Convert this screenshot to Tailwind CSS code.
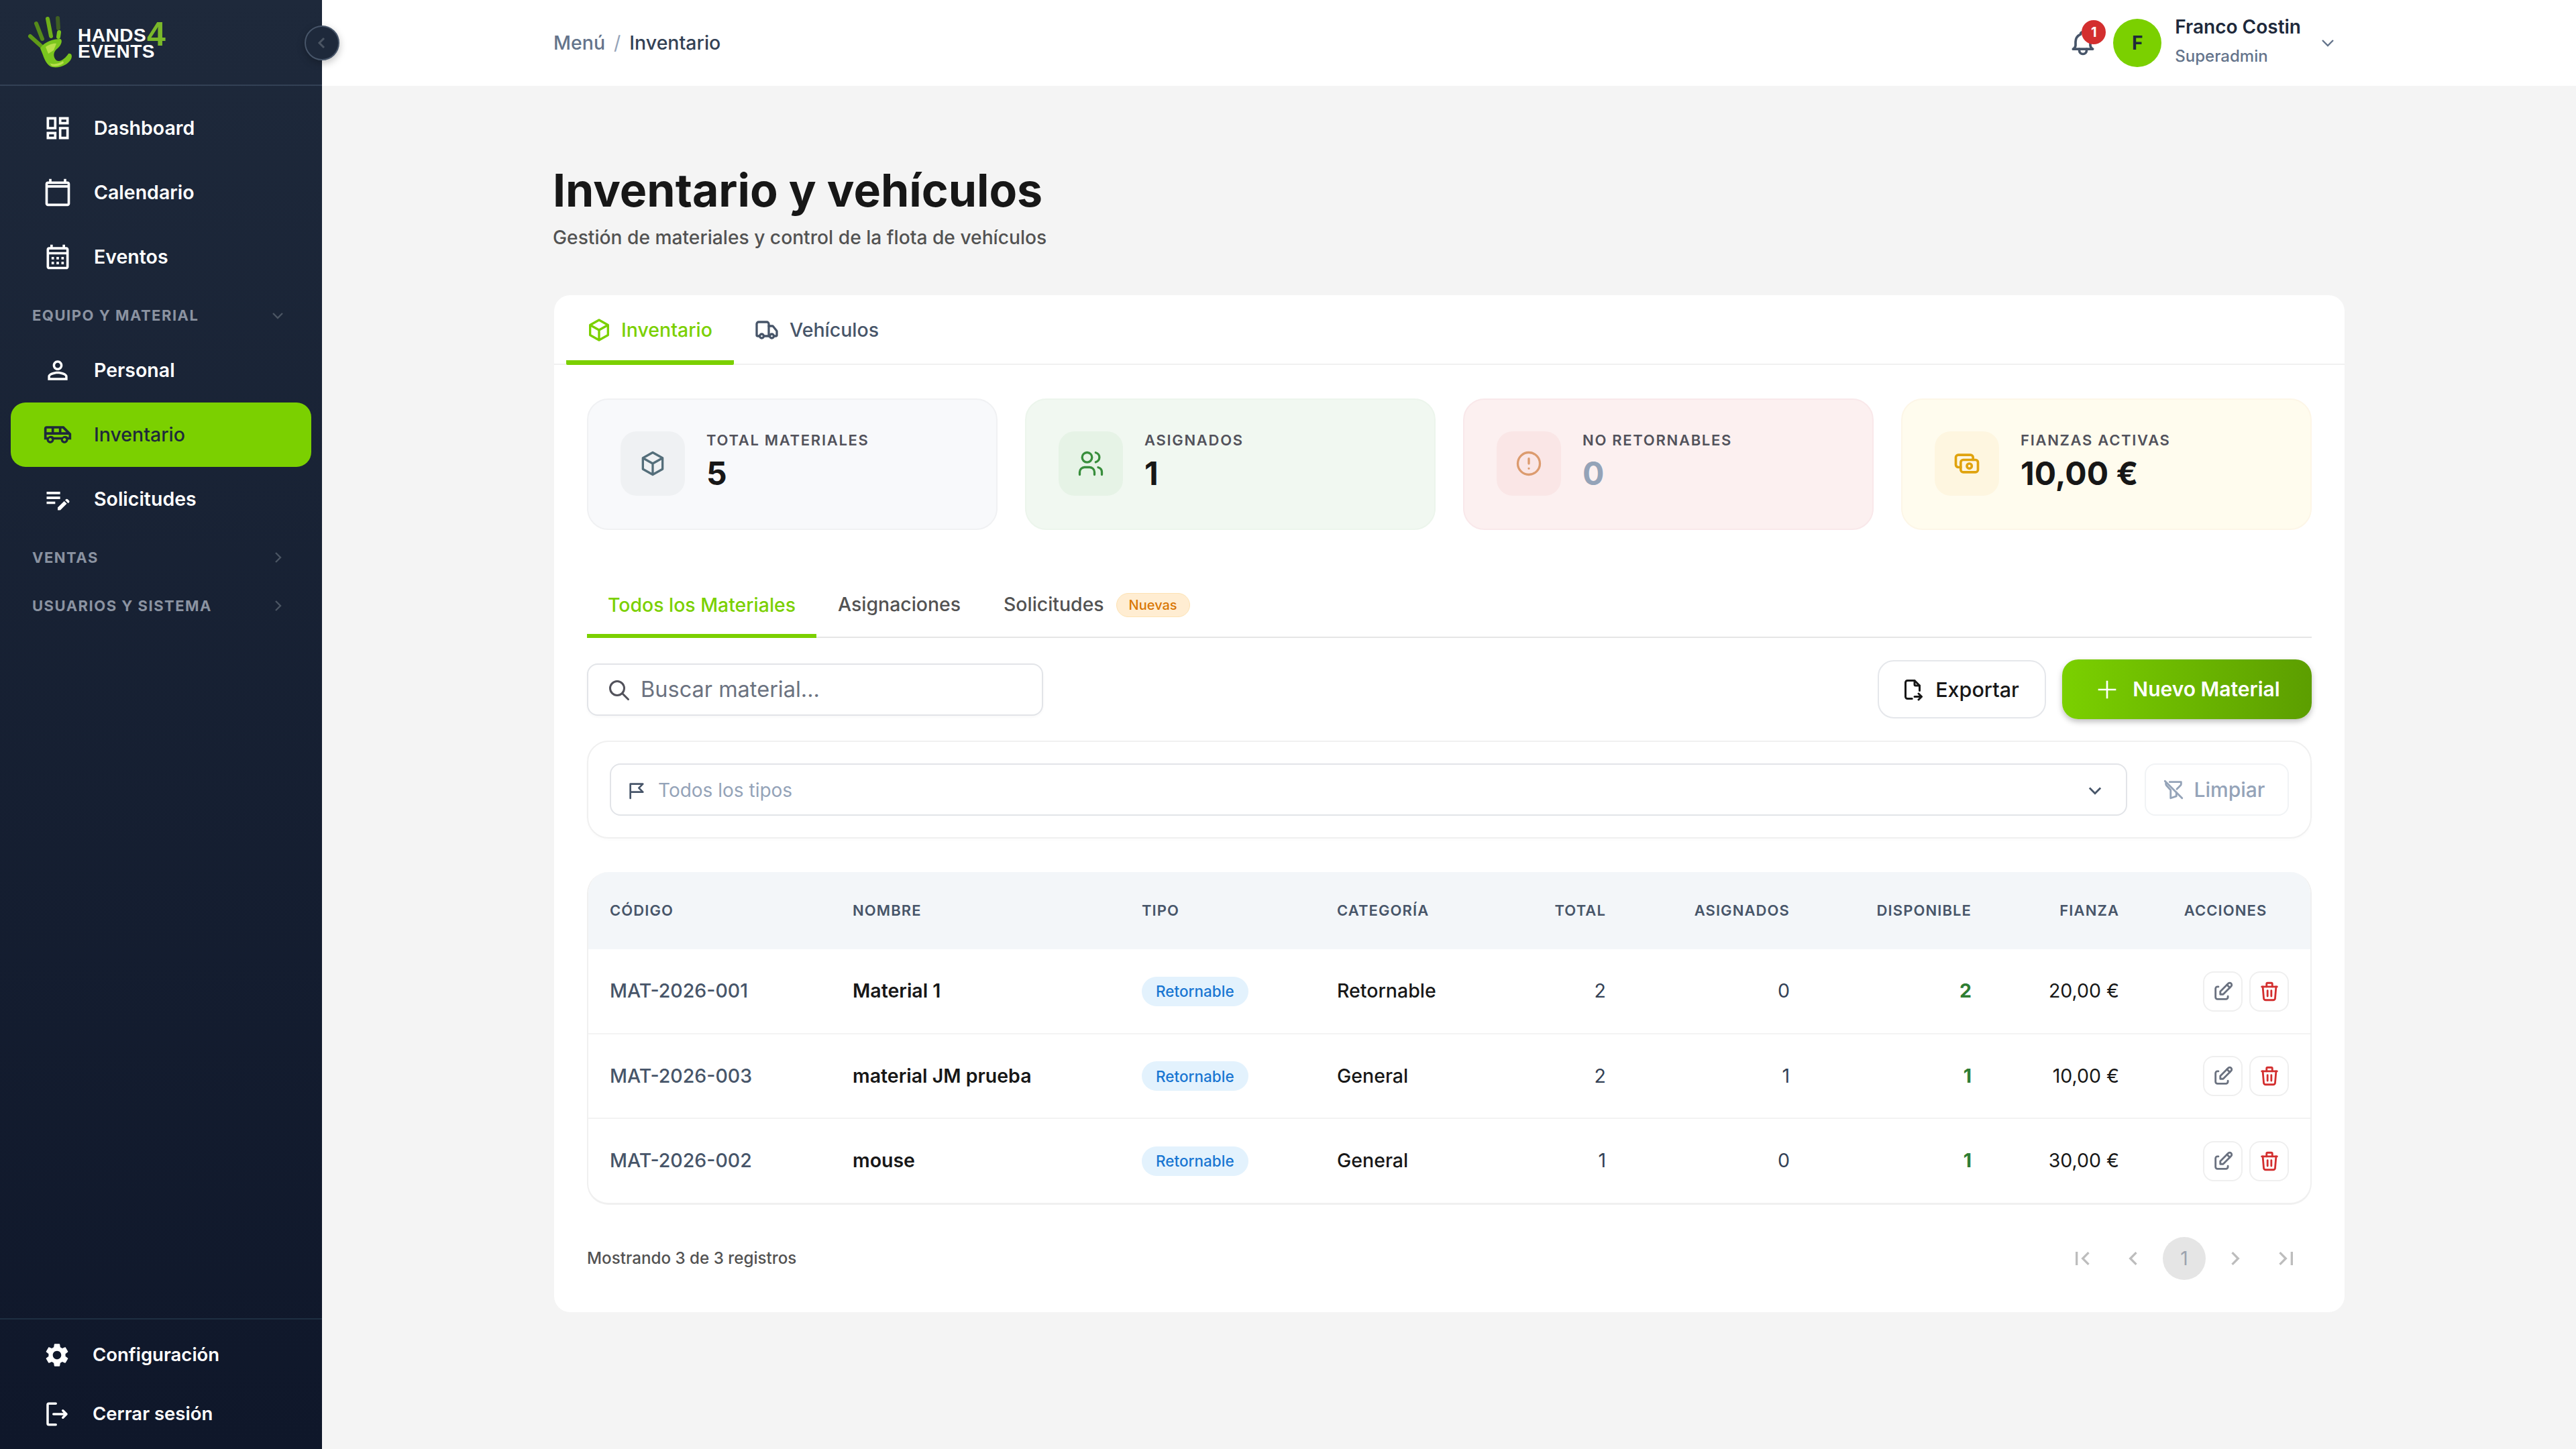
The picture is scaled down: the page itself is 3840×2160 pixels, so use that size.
<!DOCTYPE html>
<html lang="es">
<head>
    <meta charset="UTF-8">
    <meta name="viewport" content="width=device-width, initial-scale=1.0">
    <title>Inventario - Hands4Events</title>
    <script src="https://cdn.jsdelivr.net/npm/@tailwindcss/browser@4"></script>
</head>
<body class="bg-[#f4f4f4] font-[Inter,sans-serif]">
<div class="flex w-[3840px] h-[2160px] relative">

    <!-- Sidebar -->
    <aside class="w-[480px] shrink-0 flex flex-col bg-gradient-to-b from-[#1e293b] to-[#0f172a] text-white">
        <div class="h-[128px] border-b-2 border-[#334155] flex items-start pl-[40px] pt-[22px] gap-[4px]">
            <svg class="w-[72px] h-[84px] shrink-0" viewBox="38 22 72 84" fill="#7ac51e" stroke-linecap="round">
                <path d="M43 54L63 72" stroke="#5f9a18" stroke-width="6"/>
                <path d="M52 35L61 58" stroke="#558a1a" stroke-width="6"/>
                <path d="M69 28L74 54" stroke="#6fb01a" stroke-width="6"/>
                <path d="M84 27L85 42" stroke="#3f5f22" stroke-width="6"/>
                <path d="M86 48L85 55" stroke="#7ac51e" stroke-width="6"/>
                <path d="M58 72C64 62 78 58 88 58C92 60 89 68 84 72C78 76 76 84 82 90C88 94 96 86 100 80C105 79 106 84 104 88C100 96 88 102 76 100C68 98 64 88 62 82Z"/>
                <path d="M66 70c4-3 12-6 16-5l-4 10-8 5z" fill="#b8e04a"/>
                <path d="M72 94c5 3 14 1 20-3l1 3c-5 4-13 6-18 4z" fill="#b8e04a"/>
            </svg>
            <div class="relative pt-[19px] font-['Liberation_Sans',sans-serif] font-bold text-[28px] leading-[24px] tracking-[0.5px] text-white">
                <div>HANDS</div>
                <div>EVENTS</div>
                <span class="absolute left-[103px] top-[4px] text-[50px] leading-[50px] text-[#7ab82a]">4</span>
            </div>
        </div>

        <nav class="pt-[15px] flex flex-col text-[28.5px] font-semibold">
            <a class="mx-[16px] h-[96px] pl-[48px] flex items-center gap-[32px]">
                <svg class="w-[44px] h-[44px]" viewBox="0 0 24 24" fill="currentColor"><path d="M19 5v2h-4V5zM9 5v6H5V5zm10 8v6h-4v-6zM9 17v2H5v-2zM21 3h-8v6h8zM11 3H3v10h8zm10 8h-8v10h8zm-10 4H3v6h8z"/></svg>
                Dashboard
            </a>
            <a class="mx-[16px] h-[96px] pl-[48px] flex items-center gap-[32px]">
                <svg class="w-[44px] h-[44px]" viewBox="0 0 24 24" fill="currentColor"><path d="M20 3h-1V1h-2v2H7V1H5v2H4c-1.1 0-2 .9-2 2v16c0 1.1.9 2 2 2h16c1.1 0 2-.9 2-2V5c0-1.1-.9-2-2-2m0 18H4V8h16zm0-15H4V5h16z"/></svg>
                Calendario
            </a>
            <a class="mx-[16px] h-[96px] pl-[48px] flex items-center gap-[32px]">
                <svg class="w-[44px] h-[44px]" viewBox="0 0 24 24" fill="currentColor"><path d="M19 4h-1V2h-2v2H8V2H6v2H5c-1.11 0-1.99.9-1.99 2L3 20c0 1.1.89 2 2 2h14c1.1 0 2-.9 2-2V6c0-1.1-.9-2-2-2m0 16H5V10h14zm0-12H5V6h14zM9 14H7v-2h2zm4 0h-2v-2h2zm4 0h-2v-2h2zm-8 4H7v-2h2zm4 0h-2v-2h2zm4 0h-2v-2h2z"/></svg>
                Eventos
            </a>

            <div class="h-[72px] mb-px pt-[6px] pl-[48px] pr-[54px] flex items-center justify-between text-[22px] font-bold tracking-[1.5px] text-[#8b93a1]">
                EQUIPO Y MATERIAL
                <svg class="w-[24px] h-[24px] text-[#4b5563]" viewBox="0 0 24 24" fill="none" stroke="currentColor" stroke-width="2.4"><path d="M5 9l7 7 7-7"/></svg>
            </div>
            <a class="mx-[16px] h-[96px] pl-[48px] flex items-center gap-[32px]">
                <svg class="w-[44px] h-[44px]" viewBox="0 0 24 24" fill="currentColor"><path d="M12 5.9c1.16 0 2.1.94 2.1 2.1s-.94 2.1-2.1 2.1S9.9 9.16 9.9 8s.94-2.1 2.1-2.1m0 9c2.97 0 6.1 1.46 6.1 2.1v1.1H5.9V17c0-.64 3.13-2.1 6.1-2.1M12 4C9.79 4 8 5.79 8 8s1.79 4 4 4 4-1.79 4-4-1.79-4-4-4m0 9c-2.67 0-8 1.34-8 4v3h16v-3c0-2.66-5.33-4-8-4"/></svg>
                Personal
            </a>
            <a class="mx-[16px] h-[96px] pl-[48px] flex items-center gap-[32px] rounded-[22px] bg-[#7bd000] text-[#1e293b] font-medium">
                <svg class="w-[44px] h-[44px]" viewBox="0 0 24 24" fill="currentColor"><path d="M17 5H3c-1.1 0-2 .89-2 2v9h2c0 1.65 1.34 3 3 3s3-1.35 3-3h5.5c0 1.65 1.34 3 3 3s3-1.35 3-3H23v-5zm-2 2h1l3 3h-4zM9 7h4v3H9zM3 7h4v3H3zm3 10.25c-.69 0-1.25-.56-1.25-1.25s.56-1.25 1.25-1.25 1.25.56 1.25 1.25-.56 1.25-1.25 1.25m11.5 0c-.69 0-1.25-.56-1.25-1.25s.56-1.25 1.25-1.25 1.25.56 1.25 1.25-.56 1.25-1.25 1.25M21 14h-.78c-.55-.61-1.34-1-2.22-1s-1.67.39-2.22 1H8.78c-.55-.61-1.34-1-2.28-1s-1.67.39-2.22 1H3v-2h18z"/></svg>
                Inventario
            </a>
            <a class="mx-[16px] h-[96px] pl-[48px] flex items-center gap-[32px]">
                <svg class="w-[44px] h-[44px]" viewBox="0 0 24 24" fill="currentColor"><path d="M3 10h11v2H3zm0-2h11V6H3zm0 8h7v-2H3zm15.01-3.13.71-.71c.39-.39 1.02-.39 1.41 0l1.12 1.12c.39.39.39 1.02 0 1.41l-.71.71zm-.71.71L12 18.88V21h2.12l5.3-5.3z"/></svg>
                Solicitudes
            </a>

            <div class="h-[72px] pt-[6px] pl-[48px] pr-[54px] flex items-center justify-between text-[22px] font-bold tracking-[1.5px] text-[#8b93a1]">
                VENTAS
                <svg class="w-[24px] h-[24px] text-[#4b5563]" viewBox="0 0 24 24" fill="none" stroke="currentColor" stroke-width="2.4"><path d="M9 5l7 7-7 7"/></svg>
            </div>
            <div class="h-[72px] pt-[6px] pl-[48px] pr-[54px] flex items-center justify-between text-[22px] font-bold tracking-[1.5px] text-[#8b93a1]">
                USUARIOS Y SISTEMA
                <svg class="w-[24px] h-[24px] text-[#4b5563]" viewBox="0 0 24 24" fill="none" stroke="currentColor" stroke-width="2.4"><path d="M9 5l7 7-7 7"/></svg>
            </div>
        </nav>

        <div class="mt-auto mb-[8px] border-t-2 border-[#1e2f42] pt-[9px] text-[27.5px] font-semibold">
            <a class="h-[88px] pl-[64px] flex items-center gap-[32px]">
                <svg class="w-[42px] h-[42px]" viewBox="0 0 24 24" fill="currentColor"><path d="M19.14 12.94c.04-.3.06-.61.06-.94 0-.32-.02-.64-.07-.94l2.03-1.58c.18-.14.23-.41.12-.61l-1.92-3.32c-.12-.22-.37-.29-.59-.22l-2.39.96c-.5-.38-1.03-.7-1.62-.94l-.36-2.54c-.04-.24-.24-.41-.48-.41h-3.84c-.24 0-.43.17-.47.41l-.36 2.54c-.59.24-1.13.57-1.62.94l-2.39-.96c-.22-.08-.47 0-.59.22L2.74 8.87c-.12.21-.08.47.12.61l2.03 1.58c-.05.3-.09.63-.09.94s.02.64.07.94l-2.03 1.58c-.18.14-.23.41-.12.61l1.92 3.32c.12.22.37.29.59.22l2.39-.96c.5.38 1.03.7 1.62.94l.36 2.54c.05.24.24.41.48.41h3.84c.24 0 .44-.17.47-.41l.36-2.54c.59-.24 1.13-.56 1.62-.94l2.39.96c.22.08.47 0 .59-.22l1.92-3.32c.12-.22.07-.47-.12-.61zM12 15.6c-1.98 0-3.6-1.62-3.6-3.6s1.62-3.6 3.6-3.6 3.6 1.62 3.6 3.6-1.62 3.6-3.6 3.6"/></svg>
                Configuración
            </a>
            <a class="h-[88px] pl-[64px] flex items-center gap-[32px]">
                <svg class="w-[42px] h-[42px]" viewBox="0 0 24 24" fill="none" stroke="currentColor" stroke-width="2" stroke-linecap="round" stroke-linejoin="round"><path d="M11 3H5a1 1 0 0 0-1 1v16a1 1 0 0 0 1 1h6"/><path d="M9 12h11M17 9l3 3-3 3"/></svg>
                Cerrar sesión
            </a>
        </div>
    </aside>

    <!-- Collapse button -->
    <button class="absolute left-[454px] top-[38px] w-[52px] h-[52px] rounded-full bg-[#1e293b] border-2 border-[#475569] shadow-[0_4px_12px_rgba(0,0,0,0.25)] flex items-center justify-center text-[#4b5563]">
        <svg class="w-[24px] h-[24px]" viewBox="0 0 24 24" fill="none" stroke="currentColor" stroke-width="3"><path d="M15 5l-7 7 7 7"/></svg>
    </button>

    <div class="flex-1 flex flex-col min-w-0">
        <!-- Top bar -->
        <header class="h-[128px] bg-white flex items-center justify-between pl-[345px] pr-[358px] text-[28.5px] font-medium">
            <div class="flex items-center gap-[13px]">
                <span class="text-[#64748b]">Menú</span>
                <span class="text-[#94a3b8] font-normal">/</span>
                <span class="text-[#334155]">Inventario</span>
            </div>
            <div class="flex items-center">
                <div class="relative w-[44px] h-[44px] mr-[23px] text-[#475569]">
                    <svg class="w-[44px] h-[44px]" viewBox="0 0 24 24" fill="none" stroke="currentColor" stroke-width="2" stroke-linecap="round" stroke-linejoin="round"><path d="M10 5a2 2 0 1 1 4 0a7 7 0 0 1 4 6v3a4 4 0 0 0 2 3h-16a4 4 0 0 0 2-3v-3a7 7 0 0 1 4-6"/><path d="M9 17v1a3 3 0 0 0 6 0v-1"/></svg>
                    <span class="absolute -top-[12px] -right-[12px] w-[36px] h-[36px] rounded-full bg-[#d32f2f] text-white text-[20px] font-bold flex items-center justify-center">1</span>
                </div>
                <div class="w-[72px] h-[72px] rounded-full bg-[#7bd000] text-[#1e293b] font-bold text-[28px] flex items-center justify-center">F</div>
                <div class="ml-[20px] pb-[4px] flex flex-col">
                    <span class="text-[28px] leading-[36px] font-semibold text-[#1e293b]">Franco Costin</span>
                    <span class="text-[24px] leading-[36px] mt-[8px] text-[#64748b]">Superadmin</span>
                </div>
                <svg class="ml-[28px] w-[24px] h-[24px] text-[#64748b]" viewBox="0 0 24 24" fill="none" stroke="currentColor" stroke-width="2.4"><path d="M4 8l8 8 8-8"/></svg>
            </div>
        </header>

        <!-- Content -->
        <main class="pt-[115px] pl-[344px] pr-[345px]">
            <h1 class="text-[68px] leading-[80px] font-bold text-[#171717]">Inventario y vehículos</h1>
            <p class="mt-[11px] text-[28.2px] leading-[40px] font-medium text-[#525252]">Gestión de materiales y control de la flota de vehículos</p>

            <section class="mt-[66px] ml-[2px] bg-white rounded-[24px] pb-[48px]">
                <!-- Top tabs -->
                <div class="h-[104px] pl-[18px] flex border-b-2 border-[#f0f0f0] text-[28.5px] font-medium">
                    <div class="h-[104px] pl-[29px] pr-[32px] pt-[7px] flex items-center gap-[13px] border-b-[7px] border-[#7bd000] rounded-b-[2px] text-[#7bd000]">
                        <svg class="w-[40px] h-[40px]" viewBox="0 0 24 24" fill="none" stroke="currentColor" stroke-width="2" stroke-linejoin="round"><path d="M12 3l8 4.5v9L12 21l-8-4.5v-9zM12 12l8-4.5M12 12v9M12 12L4 7.5"/></svg>
                        Inventario
                    </div>
                    <div class="h-[104px] pl-[31px] pr-[32px] flex items-center gap-[16px] text-[#475569]">
                        <svg class="w-[36px] h-[36px]" viewBox="0 0 24 24" fill="none" stroke="currentColor" stroke-width="2.2" stroke-linecap="round" stroke-linejoin="round"><path d="M14 18V6a2 2 0 0 0-2-2H4a2 2 0 0 0-2 2v11a1 1 0 0 0 1 1h2"/><path d="M15 18H9"/><path d="M19 18h2a1 1 0 0 0 1-1v-3.65a1 1 0 0 0-.22-.624l-3.48-4.35A1 1 0 0 0 17.52 8H14"/><circle cx="17" cy="18" r="2"/><circle cx="7" cy="18" r="2"/></svg>
                        Vehículos
                    </div>
                </div>

                <div class="px-[49px]">
                    <!-- Stat cards -->
                    <div class="mt-[50px] grid grid-cols-4 gap-[41px]">
                        <div class="h-[196px] rounded-[32px] border-2 border-[#f0f1f3] bg-[#f8f9fb] pt-[47px] pl-[48px] flex gap-[32px]">
                            <div class="w-[96px] h-[96px] rounded-[24px] bg-[#eff1f3] flex items-center justify-center text-[#546e7a]">
                                <svg class="w-[44px] h-[44px]" viewBox="0 0 24 24" fill="none" stroke="currentColor" stroke-width="1.8" stroke-linejoin="round"><path d="M12 3l8 4.5v9L12 21l-8-4.5v-9zM12 12l8-4.5M12 12v9M12 12L4 7.5"/></svg>
                            </div>
                            <div>
                                <div class="text-[22px] leading-[26px] font-semibold tracking-[1.7px] text-[#52525b]">TOTAL MATERIALES</div>
                                <div class="mt-[13px] text-[48px] leading-[48px] font-bold text-[#171717]">5</div>
                            </div>
                        </div>
                        <div class="h-[196px] rounded-[32px] border-2 border-[#ecf5ec] bg-[#f1f8f1] pt-[47px] pl-[48px] flex gap-[32px]">
                            <div class="w-[96px] h-[96px] rounded-[24px] bg-[#e6f3e6] flex items-center justify-center text-[#388e3c]">
                                <svg class="w-[44px] h-[44px]" viewBox="0 0 24 24" fill="none" stroke="currentColor" stroke-width="1.8" stroke-linecap="round" stroke-linejoin="round"><circle cx="9" cy="7" r="4"/><path d="M3 21v-2a4 4 0 0 1 4-4h4a4 4 0 0 1 4 4v2"/><path d="M16 3.13a4 4 0 0 1 0 7.75"/><path d="M21 21v-2a4 4 0 0 0-3-3.85"/></svg>
                            </div>
                            <div>
                                <div class="text-[22px] leading-[26px] font-semibold tracking-[1.7px] text-[#52525b]">ASIGNADOS</div>
                                <div class="mt-[13px] text-[48px] leading-[48px] font-bold text-[#171717]">1</div>
                            </div>
                        </div>
                        <div class="h-[196px] rounded-[32px] border-2 border-[#f9e8ea] bg-[#fcf0f0] pt-[47px] pl-[48px] flex gap-[32px]">
                            <div class="w-[96px] h-[96px] rounded-[24px] bg-[#fae6e6] flex items-center justify-center text-[#dc9b6e]">
                                <svg class="w-[44px] h-[44px]" viewBox="0 0 24 24" fill="none" stroke="currentColor" stroke-width="1.8" stroke-linecap="round"><circle cx="12" cy="12" r="9"/><path d="M12 8v4M12 16h.01"/></svg>
                            </div>
                            <div>
                                <div class="text-[22px] leading-[26px] font-semibold tracking-[1.7px] text-[#52525b]">NO RETORNABLES</div>
                                <div class="mt-[13px] text-[48px] leading-[48px] font-bold text-[#94a3b8]">0</div>
                            </div>
                        </div>
                        <div class="h-[196px] rounded-[32px] border-2 border-[#fdf6e7] bg-[#fffcee] pt-[47px] pl-[48px] flex gap-[32px]">
                            <div class="w-[96px] h-[96px] rounded-[24px] bg-[#fef6e0] flex items-center justify-center text-[#e0a30e]">
                                <svg class="w-[44px] h-[44px]" viewBox="0 0 24 24" fill="none" stroke="currentColor" stroke-width="2" stroke-linecap="round" stroke-linejoin="round"><rect x="7" y="9" width="14" height="10" rx="2"/><circle cx="14" cy="14" r="2"/><path d="M17 9V7a2 2 0 0 0-2-2H5a2 2 0 0 0-2 2v6a2 2 0 0 0 2 2h2"/></svg>
                            </div>
                            <div>
                                <div class="text-[22px] leading-[26px] font-semibold tracking-[1.7px] text-[#52525b]">FIANZAS ACTIVAS</div>
                                <div class="mt-[13px] text-[48px] leading-[48px] font-bold text-[#171717]">10,00 €</div>
                            </div>
                        </div>
                    </div>

                    <!-- Sub tabs -->
                    <div class="mt-[64px] h-[97px] flex border-b-2 border-[#e5e5e5] text-[28.4px] font-medium text-[#525252]">
                        <div class="h-[97px] px-[31px] pt-[6px] flex items-center border-b-[6px] border-[#7bd000] text-[#7bd000]">Todos los Materiales</div>
                        <div class="px-[32px] flex items-center">Asignaciones</div>
                        <div class="pl-[32px] flex items-center gap-[18px]">
                            Solicitudes
                            <span class="h-[36px] px-[18px] rounded-full border border-[#fde2b3] bg-[#ffedd2] text-[20px] text-[#d97706] flex items-center">Nuevas</span>
                        </div>
                    </div>

                    <!-- Toolbar -->
                    <div class="mt-[32px] flex items-center">
                        <div class="w-[680px] h-[78px] rounded-[16px] border-2 border-[#e2e4e8] shadow-[0_2px_4px_rgba(0,0,0,0.03)] pl-[28px] pt-[2px] flex items-center gap-[14px] text-[32.5px] text-[#6b7280]">
                            <svg class="w-[36px] h-[36px] text-[#52525b]" viewBox="0 0 24 24" fill="none" stroke="currentColor" stroke-width="2" stroke-linecap="round"><circle cx="10" cy="10" r="7"/><path d="M21 21l-6-6"/></svg>
                            Buscar material...
                        </div>
                        <button class="ml-auto w-[251px] h-[87px] pr-[6px] rounded-[24px] border-2 border-[#e5e7eb] bg-white flex items-center justify-center gap-[16px] text-[30.5px] font-medium text-[#171717]">
                            <svg class="w-[36px] h-[36px]" viewBox="0 0 24 24" fill="none" stroke="currentColor" stroke-width="2" stroke-linecap="round" stroke-linejoin="round"><path d="M14 3v4a1 1 0 0 0 1 1h4"/><path d="M11.5 21h-4.5a2 2 0 0 1-2-2v-14a2 2 0 0 1 2-2h7l5 5v5m-5 6h7m-3-3 3 3-3 3"/></svg>
                            Exportar
                        </button>
                        <button class="ml-[24px] w-[372px] h-[89px] rounded-[24px] bg-gradient-to-r from-[#7bd000] to-[#5c9e00] shadow-[0_4px_8px_rgba(0,0,0,0.25)] flex items-center justify-center gap-[18px] text-[30px] font-semibold text-white">
                            <svg class="w-[40px] h-[40px]" viewBox="0 0 24 24" fill="none" stroke="currentColor" stroke-width="1.6"><path d="M12 4v16M4 12h16"/></svg>
                            Nuevo Material
                        </button>
                    </div>

                    <!-- Filters -->
                    <div class="mt-[32px] h-[146px] rounded-[32px] border-2 border-[#f0f0f0] px-[32px] flex items-center gap-[26px] shadow-[0_2px_4px_rgba(0,0,0,0.02)]">
                        <div class="flex-1 h-[78px] rounded-[16px] border-2 border-[#e2e4e8] pl-[22px] pr-[32px] pt-[1px] flex items-center gap-[16px] text-[28px] text-[#94a3b8]">
                            <svg class="w-[32px] h-[32px] text-[#475569]" viewBox="0 0 24 24" fill="none" stroke="currentColor" stroke-width="2" stroke-linecap="round" stroke-linejoin="round"><path d="M5 14h14l-4.5-4.5L19 5H5v16"/></svg>
                            Todos los tipos
                            <svg class="ml-auto w-[28px] h-[28px] text-[#475569]" viewBox="0 0 24 24" fill="none" stroke="currentColor" stroke-width="2.4"><path d="M5 9l7 7 7-7"/></svg>
                        </div>
                        <button class="w-[215px] h-[78px] pr-[10px] rounded-[16px] border-2 border-[#f1f3f5] flex items-center justify-center gap-[14px] text-[30px] font-medium text-[#94a3b8]">
                            <svg class="w-[34px] h-[34px]" viewBox="0 0 24 24" fill="none" stroke="currentColor" stroke-width="2" stroke-linecap="round" stroke-linejoin="round"><path d="M8 4h12v2.172a2 2 0 0 1-.586 1.414l-3.914 3.914m-.5 3.5v4l-6 2v-8.5l-4.48-4.928a2 2 0 0 1-.52-1.345v-1.227"/><path d="M3 3l18 18"/></svg>
                            Limpiar
                        </button>
                    </div>

                    <!-- Table -->
                    <div class="mt-[50px] rounded-[32px] border-x-2 border-b-[3px] border-[#f0f0f0] overflow-hidden">
                        <table class="w-full table-fixed text-[28.5px] [&_td]:px-[32px] [&_th]:px-[32px]">
                            <colgroup>
                                <col class="w-[362px]"><col class="w-[431px]"><col class="w-[291px]"><col class="w-[298px]"><col class="w-[167px]"><col class="w-[274px]"><col class="w-[271px]"><col class="w-[220px]"><col>
                            </colgroup>
                            <thead class="bg-[#f3f6f9] text-[22px] tracking-[1.1px] font-semibold text-[#475569]">
                                <tr class="h-[115px]">
                                    <th class="text-left font-semibold">CÓDIGO</th>
                                    <th class="text-left font-semibold">NOMBRE</th>
                                    <th class="text-left font-semibold">TIPO</th>
                                    <th class="text-left font-semibold">CATEGORÍA</th>
                                    <th class="text-right font-semibold">TOTAL</th>
                                    <th class="text-right font-semibold">ASIGNADOS</th>
                                    <th class="text-right font-semibold">DISPONIBLE</th>
                                    <th class="text-right font-semibold">FIANZA</th>
                                    <th class="text-center font-semibold">ACCIONES</th>
                                </tr>
                            </thead>
                            <tbody class="text-[#171717]">
                                <tr class="h-[126px] border-b-2 border-[#f3f3f3]">
                                    <td class="font-medium text-[#475569]">MAT-2026-001</td>
                                    <td class="font-semibold">Material 1</td>
                                    <td><span class="inline-flex items-center h-[44px] px-[21px] rounded-full bg-[#e3f2fd] text-[22.5px] font-medium text-[#1976d2]">Retornable</span></td>
                                    <td class="font-medium">Retornable</td>
                                    <td class="text-right text-[#334155]">2</td>
                                    <td class="text-right text-[#334155]">0</td>
                                    <td class="text-right font-bold text-[#2e7d32]">2</td>
                                    <td class="text-right">20,00 €</td>
                                    <td>
                                        <div class="flex justify-end gap-[10px]">
                                            <button class="w-[59px] h-[60px] rounded-[16px] border-2 border-[#efefef] flex items-center justify-center text-[#6b7280]">
                                                <svg class="w-[34px] h-[34px]" viewBox="0 0 24 24" fill="none" stroke="currentColor" stroke-width="2" stroke-linecap="round" stroke-linejoin="round"><path d="M7 7h-1a2 2 0 0 0-2 2v9a2 2 0 0 0 2 2h9a2 2 0 0 0 2-2v-1"/><path d="M20.385 6.585a2.1 2.1 0 0 0-2.97-2.97l-8.415 8.385v3h3l8.385-8.415"/><path d="M16 5l3 3"/></svg>
                                            </button>
                                            <button class="w-[59px] h-[60px] rounded-[16px] border-2 border-[#efefef] flex items-center justify-center text-[#d32f2f]">
                                                <svg class="w-[34px] h-[34px]" viewBox="0 0 24 24" fill="none" stroke="currentColor" stroke-width="2" stroke-linecap="round" stroke-linejoin="round"><path d="M4 7h16M10 11v6M14 11v6"/><path d="M5 7l1 12a2 2 0 0 0 2 2h8a2 2 0 0 0 2-2l1-12"/><path d="M9 7V4a1 1 0 0 1 1-1h4a1 1 0 0 1 1 1v3"/></svg>
                                            </button>
                                        </div>
                                    </td>
                                </tr>
                                <tr class="h-[126px] border-b-2 border-[#f3f3f3]">
                                    <td class="font-medium text-[#475569]">MAT-2026-003</td>
                                    <td class="font-semibold">material JM prueba</td>
                                    <td><span class="inline-flex items-center h-[44px] px-[21px] rounded-full bg-[#e3f2fd] text-[22.5px] font-medium text-[#1976d2]">Retornable</span></td>
                                    <td class="font-medium">General</td>
                                    <td class="text-right text-[#334155]">2</td>
                                    <td class="text-right text-[#334155]">1</td>
                                    <td class="text-right font-bold text-[#2e7d32]">1</td>
                                    <td class="text-right">10,00 €</td>
                                    <td>
                                        <div class="flex justify-end gap-[10px]">
                                            <button class="w-[59px] h-[60px] rounded-[16px] border-2 border-[#efefef] flex items-center justify-center text-[#6b7280]">
                                                <svg class="w-[34px] h-[34px]" viewBox="0 0 24 24" fill="none" stroke="currentColor" stroke-width="2" stroke-linecap="round" stroke-linejoin="round"><path d="M7 7h-1a2 2 0 0 0-2 2v9a2 2 0 0 0 2 2h9a2 2 0 0 0 2-2v-1"/><path d="M20.385 6.585a2.1 2.1 0 0 0-2.97-2.97l-8.415 8.385v3h3l8.385-8.415"/><path d="M16 5l3 3"/></svg>
                                            </button>
                                            <button class="w-[59px] h-[60px] rounded-[16px] border-2 border-[#efefef] flex items-center justify-center text-[#d32f2f]">
                                                <svg class="w-[34px] h-[34px]" viewBox="0 0 24 24" fill="none" stroke="currentColor" stroke-width="2" stroke-linecap="round" stroke-linejoin="round"><path d="M4 7h16M10 11v6M14 11v6"/><path d="M5 7l1 12a2 2 0 0 0 2 2h8a2 2 0 0 0 2-2l1-12"/><path d="M9 7V4a1 1 0 0 1 1-1h4a1 1 0 0 1 1 1v3"/></svg>
                                            </button>
                                        </div>
                                    </td>
                                </tr>
                                <tr class="h-[126px]">
                                    <td class="font-medium text-[#475569]">MAT-2026-002</td>
                                    <td class="font-semibold">mouse</td>
                                    <td><span class="inline-flex items-center h-[44px] px-[21px] rounded-full bg-[#e3f2fd] text-[22.5px] font-medium text-[#1976d2]">Retornable</span></td>
                                    <td class="font-medium">General</td>
                                    <td class="text-right text-[#334155]">1</td>
                                    <td class="text-right text-[#334155]">0</td>
                                    <td class="text-right font-bold text-[#2e7d32]">1</td>
                                    <td class="text-right">30,00 €</td>
                                    <td>
                                        <div class="flex justify-end gap-[10px]">
                                            <button class="w-[59px] h-[60px] rounded-[16px] border-2 border-[#efefef] flex items-center justify-center text-[#6b7280]">
                                                <svg class="w-[34px] h-[34px]" viewBox="0 0 24 24" fill="none" stroke="currentColor" stroke-width="2" stroke-linecap="round" stroke-linejoin="round"><path d="M7 7h-1a2 2 0 0 0-2 2v9a2 2 0 0 0 2 2h9a2 2 0 0 0 2-2v-1"/><path d="M20.385 6.585a2.1 2.1 0 0 0-2.97-2.97l-8.415 8.385v3h3l8.385-8.415"/><path d="M16 5l3 3"/></svg>
                                            </button>
                                            <button class="w-[59px] h-[60px] rounded-[16px] border-2 border-[#efefef] flex items-center justify-center text-[#d32f2f]">
                                                <svg class="w-[34px] h-[34px]" viewBox="0 0 24 24" fill="none" stroke="currentColor" stroke-width="2" stroke-linecap="round" stroke-linejoin="round"><path d="M4 7h16M10 11v6M14 11v6"/><path d="M5 7l1 12a2 2 0 0 0 2 2h8a2 2 0 0 0 2-2l1-12"/><path d="M9 7V4a1 1 0 0 1 1-1h4a1 1 0 0 1 1 1v3"/></svg>
                                            </button>
                                        </div>
                                    </td>
                                </tr>
                            </tbody>
                        </table>
                    </div>

                    <!-- Pagination -->
                    <div class="mt-[48px] flex items-center justify-between">
                        <span class="text-[24.2px] font-medium text-[#525252]">Mostrando 3 de 3 registros</span>
                        <div class="flex items-center gap-[12px] mr-[6px] text-[#bdbdbd]">
                            <span class="w-[64px] h-[64px] flex items-center justify-center"><svg class="w-[40px] h-[40px]" viewBox="0 0 24 24" fill="currentColor"><path d="M18.41 16.59 13.82 12l4.59-4.59L17 6l-6 6 6 6zM6 6h2v12H6z"/></svg></span>
                            <span class="w-[64px] h-[64px] flex items-center justify-center"><svg class="w-[40px] h-[40px]" viewBox="0 0 24 24" fill="currentColor"><path d="M15.41 7.41 14 6l-6 6 6 6 1.41-1.41L10.83 12z"/></svg></span>
                            <span class="w-[64px] h-[64px] rounded-full bg-[#e5e5e5] text-[28px] text-[#9ca3af] flex items-center justify-center">1</span>
                            <span class="w-[64px] h-[64px] flex items-center justify-center"><svg class="w-[40px] h-[40px]" viewBox="0 0 24 24" fill="currentColor"><path d="M10 6 8.59 7.41 13.17 12l-4.58 4.59L10 18l6-6z"/></svg></span>
                            <span class="w-[64px] h-[64px] flex items-center justify-center"><svg class="w-[40px] h-[40px]" viewBox="0 0 24 24" fill="currentColor"><path d="M5.59 7.41 10.18 12l-4.59 4.59L7 18l6-6-6-6zM16 6h2v12h-2z"/></svg></span>
                        </div>
                    </div>
                </div>
            </section>
        </main>
    </div>
</div>
</body>
</html>
